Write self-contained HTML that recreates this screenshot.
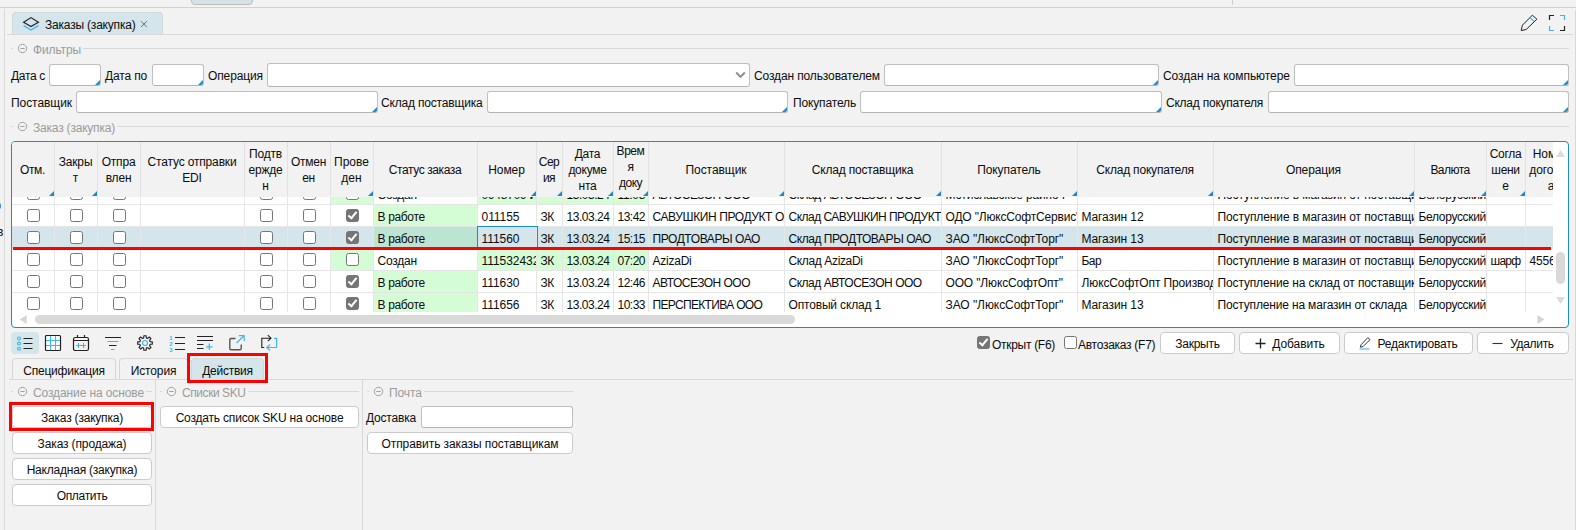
<!DOCTYPE html>
<html lang="ru"><head><meta charset="utf-8"><title>Заказы (закупка)</title>
<style>
html,body{margin:0;padding:0}
body{width:1576px;height:530px;background:#f2f2f2;position:relative;overflow:hidden;font-family:"Liberation Sans",sans-serif;font-size:12px;color:#0c0c0c}
.a{position:absolute}
.t{position:absolute;white-space:nowrap;line-height:16px;height:16px;margin-top:1px}
.hl{position:absolute;height:1px;background:#d8d8d8}
.vl{position:absolute;width:1px;background:#d8d8d8}
.in{position:absolute;background:#fff;border:1px solid #bfbfbf;border-bottom-color:#b4b4b4;border-radius:3px;box-sizing:border-box;overflow:hidden}
.in.cr:after{content:"";position:absolute;right:0;bottom:0;border-style:solid;border-width:0 0 5px 5px;border-color:transparent transparent #1d8bc6 transparent}
.btn{position:absolute;background:#fff;border:1px solid #cbcbcb;border-radius:4px;box-sizing:border-box;text-align:center;line-height:23px;white-space:nowrap}
.fs{position:absolute;color:#9b9b9b;white-space:nowrap;line-height:16px;height:16px;margin-top:2px}
.cb{position:absolute;width:13px;height:13px;box-sizing:border-box;border:1px solid #767676;border-radius:2.5px;background:#fff}
.cb.k{background:#757575;border-color:#757575}
.cb.k:after{content:"";position:absolute;left:3.2px;top:0.2px;width:3.2px;height:7px;border:solid #fff;border-width:0 2px 2px 0;transform:rotate(40deg)}
.hc{position:absolute;top:0;height:54px;border-right:1px solid #e2e2e2;box-sizing:border-box;display:flex;align-items:center;justify-content:center;text-align:center;line-height:16px;overflow:hidden;padding-top:2px}
.hc.s:after{content:"";position:absolute;right:0;bottom:0;border-style:solid;border-width:0 0 5px 5px;border-color:transparent transparent #1d8bc6 transparent}
.c{position:absolute;height:22px;box-sizing:border-box;border-right:1px solid #e6e6e6;border-bottom:1px solid #e6e6e6;background:#fff;overflow:hidden;white-space:nowrap;line-height:24px;padding-left:4px}
.c.g{background:#d5fdd5}
.c.s{background:#d4e5eb}
.c.s.g{background:#bce4d2}
.c .cb{top:4px}
</style></head><body>

<div class="a" style="left:191px;top:-2px;width:62px;height:7px;background:#d5e3e8;border:1px solid #bcbcbc;border-radius:0 0 4px 4px;box-sizing:border-box"></div>
<div class="hl" style="left:0;top:7px;width:1576px;background:#d2d2d2"></div>
<div class="vl" style="left:1232px;top:0;height:5px;background:#cfcfcf"></div>
<div class="vl" style="left:4px;top:9px;height:521px"></div>
<div class="vl" style="left:1575px;top:10px;height:520px"></div>
<div class="a" style="left:12px;top:12px;width:151px;height:22px;background:#d4e5eb;border:1px solid #cfdade;border-bottom:none;border-radius:4px 4px 0 0;box-sizing:border-box"></div>
<div class="hl" style="left:7px;top:34px;width:1566px"></div>
<svg class="a" style="left:22px;top:16px" width="18" height="16" viewBox="0 0 18 16"><path d="M1.6 6.2 L9 1.6 L16.4 6.2 L9 10.6 Z" fill="none" stroke="#222" stroke-width="1.2" stroke-linejoin="miter"/><path d="M1.6 9.6 L9 14 L16.4 9.6" fill="none" stroke="#3db8ee" stroke-width="1.3"/></svg>
<div class="t" id="tabt" style="letter-spacing:-0.199px;left:45px;top:16px">Заказы (закупка)</div>
<svg class="a" style="left:140px;top:20px" width="8" height="8" viewBox="0 0 8 8"><path d="M1 1.2 L6.8 7 M6.8 1.2 L1 7" stroke="#707070" stroke-width="1" fill="none"/></svg>
<svg class="a" style="left:1519px;top:13px" width="20" height="20" viewBox="0 0 20 20"><path d="M3.4 12.2 L13.3 2.2 L17.9 6.2 L7.3 16.4 L2.2 17.6 Z" fill="none" stroke="#222" stroke-width="1" stroke-linejoin="round"/><path d="M11.2 4.7 L15.2 8.6" stroke="#3db8ee" stroke-width="1.2"/></svg>
<svg class="a" style="left:1548px;top:14px" width="18" height="18" viewBox="0 0 18 18"><path d="M1.5 6 V1.5 H6" fill="none" stroke="#222" stroke-width="1.2"/><path d="M12 1.5 H16.5 V6" fill="none" stroke="#3db8ee" stroke-width="1.2"/><path d="M1.5 12 V16.5 H6" fill="none" stroke="#3db8ee" stroke-width="1.2"/><path d="M12 16.5 H16.5 V12" fill="none" stroke="#222" stroke-width="1.2"/></svg>
<div class="hl" style="left:11px;top:48px;width:2px"></div>
<svg class="a" style="left:17px;top:43px" width="11" height="11" viewBox="0 0 11 11"><circle cx="5.5" cy="5.5" r="4.2" fill="none" stroke="#a2a2a2" stroke-width="1"/><path d="M3.3 5.5 H7.7" stroke="#a2a2a2" stroke-width="1"/></svg>
<div class="fs" id="fs1" style="letter-spacing:-0.134px;left:33px;top:40px">Фильтры</div>
<div class="hl" style="left:83px;top:48px;width:1486px"></div>
<div class="t" id="l1" style="letter-spacing:-0.318px;left:11px;top:67px">Дата с</div>
<div class="in cr" style="left:49px;top:64px;width:52px;height:22px"></div>
<div class="t" id="l2" style="letter-spacing:-0.154px;left:105px;top:67px">Дата по</div>
<div class="in cr" style="left:152px;top:64px;width:52px;height:22px"></div>
<div class="t" id="l3" style="letter-spacing:-0.117px;left:208px;top:67px">Операция</div>
<div class="in" style="left:267px;top:63px;width:483px;height:24px"></div>
<svg class="a" style="left:735px;top:71px" width="11" height="8" viewBox="0 0 11 8"><path d="M1.2 1.5 L5.5 5.8 L9.8 1.5" fill="none" stroke="#8a8a8a" stroke-width="1.9"/></svg>
<div class="t" id="l4" style="letter-spacing:-0.125px;left:754px;top:67px">Создан пользователем</div>
<div class="in cr" style="left:884px;top:64px;width:275px;height:22px"></div>
<div class="t" id="l5" style="letter-spacing:-0.045px;left:1163px;top:67px">Создан на компьютере</div>
<div class="in cr" style="left:1294px;top:64px;width:275px;height:22px"></div>
<div class="t" id="l6" style="letter-spacing:-0.061px;left:11px;top:94px">Поставщик</div>
<div class="in cr" style="left:76px;top:91px;width:302px;height:22px"></div>
<div class="t" id="l7" style="letter-spacing:-0.183px;left:381px;top:94px">Склад поставщика</div>
<div class="in cr" style="left:487px;top:91px;width:301px;height:22px"></div>
<div class="t" id="l8" style="letter-spacing:-0.148px;left:793px;top:94px">Покупатель</div>
<div class="in cr" style="left:860px;top:91px;width:302px;height:22px"></div>
<div class="t" id="l9" style="letter-spacing:-0.229px;left:1166px;top:94px">Склад покупателя</div>
<div class="in cr" style="left:1268px;top:91px;width:301px;height:22px"></div>
<div class="hl" style="left:11px;top:126px;width:2px"></div>
<svg class="a" style="left:17px;top:121px" width="11" height="11" viewBox="0 0 11 11"><circle cx="5.5" cy="5.5" r="4.2" fill="none" stroke="#a2a2a2" stroke-width="1"/><path d="M3.3 5.5 H7.7" stroke="#a2a2a2" stroke-width="1"/></svg>
<div class="fs" id="fs2" style="letter-spacing:-0.204px;left:33px;top:118px">Заказ (закупка)</div>
<div class="hl" style="left:117px;top:126px;width:1452px"></div>
<div class="a" style="left:11px;top:141px;width:1558px;height:187px;border:1.5px solid #1d8bc6;border-radius:4px;box-sizing:border-box;background:#fff;overflow:hidden">
<div class="a" style="left:-12.5px;top:-142.5px;width:1576px;height:530px">
<div class="a" style="left:12px;top:142px;width:1541px;height:55px;background:#f2f2f2;overflow:hidden">
<div class="hc s" id="h0" style="letter-spacing:-0.355px;left:0px;width:43px"><span>Отм.</span></div>
<div class="hc s" id="h1" style="letter-spacing:-0.147px;left:43px;width:43px"><span>Закры<br>т</span></div>
<div class="hc" id="h2" style="letter-spacing:-0.188px;left:86px;width:43px"><span>Отпра<br>влен</span></div>
<div class="hc" id="h3" style="letter-spacing:-0.157px;left:129px;width:104px"><span>Статус отправки<br>EDI</span></div>
<div class="hc" id="h4" style="letter-spacing:-0.184px;left:233px;width:43px"><span>Подтв<br>ержде<br>н</span></div>
<div class="hc" id="h5" style="letter-spacing:-0.278px;left:276px;width:43px"><span>Отмен<br>ен</span></div>
<div class="hc s" id="h6" style="letter-spacing:0.022px;left:319px;width:43px"><span>Прове<br>ден</span></div>
<div class="hc" id="h7" style="letter-spacing:-0.398px;left:362px;width:104px"><span>Статус заказа</span></div>
<div class="hc s" id="h8" style="letter-spacing:-0.087px;left:466px;width:59px"><span>Номер</span></div>
<div class="hc s" id="h9" style="letter-spacing:-0.505px;left:525px;width:26px"><span>Сер<br>ия</span></div>
<div class="hc s" id="h10" style="letter-spacing:-0.27px;left:551px;width:51px"><span>Дата<br>докуме<br>нта</span></div>
<div class="hc s" id="h11" style="letter-spacing:-0.465px;left:602px;width:35px;align-items:flex-start;padding-top:1px"><span>Врем<br>я<br>доку<br>мента</span></div>
<div class="hc s" id="h12" style="letter-spacing:-0.061px;left:637px;width:136px"><span>Поставщик</span></div>
<div class="hc s" id="h13" style="letter-spacing:-0.183px;left:773px;width:157px"><span>Склад поставщика</span></div>
<div class="hc s" id="h14" style="letter-spacing:-0.098px;left:930px;width:136px"><span>Покупатель</span></div>
<div class="hc s" id="h15" style="letter-spacing:-0.198px;left:1066px;width:136px"><span>Склад покупателя</span></div>
<div class="hc s" id="h16" style="letter-spacing:-0.117px;left:1202px;width:201px"><span>Операция</span></div>
<div class="hc s" id="h17" style="letter-spacing:-0.534px;left:1403px;width:72px"><span>Валюта</span></div>
<div class="hc s" id="h18" style="letter-spacing:-0.328px;left:1475px;width:39px"><span>Согла<br>шени<br>е</span></div>
<div class="hc" id="h19" style="letter-spacing:-0.087px;left:1514px;width:52px"><span>Номер<br>договор<br>а</span></div>
</div>
<div class="a" style="left:12px;top:197px;width:1541px;height:115px;overflow:hidden;background:#fff">
<div class="c" style="left:0px;top:-14px;width:43px;padding:0"><div class="cb" style="left:15px"></div></div>
<div class="c" style="left:43px;top:-14px;width:43px;padding:0"><div class="cb" style="left:15px"></div></div>
<div class="c" style="left:86px;top:-14px;width:43px;padding:0"><div class="cb" style="left:15px"></div></div>
<div class="c" id="r0c3" style="left:129px;top:-14px;width:104px"></div>
<div class="c" style="left:233px;top:-14px;width:43px;padding:0"><div class="cb" style="left:15px"></div></div>
<div class="c" style="left:276px;top:-14px;width:43px;padding:0"><div class="cb" style="left:15px"></div></div>
<div class="c g" style="left:319px;top:-14px;width:43px;padding:0"><div class="cb" style="left:15px"></div></div>
<div class="c" id="r0c7" style="letter-spacing:-0.208px;left:362px;top:-14px;width:104px">Создан</div>
<div class="c g" id="r0c8" style="letter-spacing:-0.246px;left:466px;top:-14px;width:59px">0948709 И</div>
<div class="c g" id="r0c9" style="left:525px;top:-14px;width:26px"></div>
<div class="c g" id="r0c10" style="letter-spacing:-0.465px;left:551px;top:-14px;width:51px">13.03.24</div>
<div class="c g" id="r0c11" style="letter-spacing:-0.328px;left:602px;top:-14px;width:35px">11:08</div>
<div class="c" id="r0c12" style="letter-spacing:-0.514px;left:637px;top:-14px;width:136px">АВТОСЕЗОН ООО</div>
<div class="c" id="r0c13" style="letter-spacing:-0.476px;left:773px;top:-14px;width:157px">Склад АВТОСЕЗОН ООО</div>
<div class="c" id="r0c14" style="letter-spacing:-0.141px;left:930px;top:-14px;width:136px">Мстиславское райпо I</div>
<div class="c" id="r0c15" style="left:1066px;top:-14px;width:136px"></div>
<div class="c" id="r0c16" style="letter-spacing:-0.097px;left:1202px;top:-14px;width:201px">Поступление в магазин от поставщика</div>
<div class="c" id="r0c17" style="letter-spacing:-0.321px;left:1403px;top:-14px;width:72px">Белорусский рубль</div>
<div class="c" id="r0c18" style="left:1475px;top:-14px;width:39px"></div>
<div class="c" id="r0c19" style="left:1514px;top:-14px;width:52px"></div>
<div class="c" style="left:0px;top:8px;width:43px;padding:0"><div class="cb" style="left:15px"></div></div>
<div class="c" style="left:43px;top:8px;width:43px;padding:0"><div class="cb" style="left:15px"></div></div>
<div class="c" style="left:86px;top:8px;width:43px;padding:0"><div class="cb" style="left:15px"></div></div>
<div class="c" id="r1c3" style="left:129px;top:8px;width:104px"></div>
<div class="c" style="left:233px;top:8px;width:43px;padding:0"><div class="cb" style="left:15px"></div></div>
<div class="c" style="left:276px;top:8px;width:43px;padding:0"><div class="cb" style="left:15px"></div></div>
<div class="c" style="left:319px;top:8px;width:43px;padding:0"><div class="cb k" style="left:15px"></div></div>
<div class="c g" id="r1c7" style="letter-spacing:-0.339px;left:362px;top:8px;width:104px">В работе</div>
<div class="c" id="r1c8" style="letter-spacing:-0.044px;left:466px;top:8px;width:59px">011155</div>
<div class="c" id="r1c9" style="letter-spacing:-0.375px;left:525px;top:8px;width:26px">ЗК</div>
<div class="c" id="r1c10" style="letter-spacing:-0.465px;left:551px;top:8px;width:51px">13.03.24</div>
<div class="c" id="r1c11" style="letter-spacing:-0.506px;left:602px;top:8px;width:35px">13:42</div>
<div class="c" id="r1c12" style="letter-spacing:-0.396px;left:637px;top:8px;width:136px">САВУШКИН ПРОДУКТ ОАО</div>
<div class="c" id="r1c13" style="letter-spacing:-0.521px;left:773px;top:8px;width:157px">Склад САВУШКИН ПРОДУКТ ОАО</div>
<div class="c" id="r1c14" style="letter-spacing:-0.18px;left:930px;top:8px;width:136px">ОДО "ЛюксСофтСервис"</div>
<div class="c" id="r1c15" style="letter-spacing:-0.098px;left:1066px;top:8px;width:136px">Магазин 12</div>
<div class="c" id="r1c16" style="letter-spacing:-0.097px;left:1202px;top:8px;width:201px">Поступление в магазин от поставщика</div>
<div class="c" id="r1c17" style="letter-spacing:-0.321px;left:1403px;top:8px;width:72px">Белорусский рубль</div>
<div class="c" id="r1c18" style="left:1475px;top:8px;width:39px"></div>
<div class="c" id="r1c19" style="left:1514px;top:8px;width:52px"></div>
<div class="c s" style="left:0px;top:30px;width:43px;padding:0"><div class="cb" style="left:15px"></div></div>
<div class="c s" style="left:43px;top:30px;width:43px;padding:0"><div class="cb" style="left:15px"></div></div>
<div class="c s" style="left:86px;top:30px;width:43px;padding:0"><div class="cb" style="left:15px"></div></div>
<div class="c s" id="r2c3" style="left:129px;top:30px;width:104px"></div>
<div class="c s" style="left:233px;top:30px;width:43px;padding:0"><div class="cb" style="left:15px"></div></div>
<div class="c s" style="left:276px;top:30px;width:43px;padding:0"><div class="cb" style="left:15px"></div></div>
<div class="c s" style="left:319px;top:30px;width:43px;padding:0"><div class="cb k" style="left:15px"></div></div>
<div class="c s g" id="r2c7" style="letter-spacing:-0.339px;left:362px;top:30px;width:104px">В работе</div>
<div class="c s" id="r2c8" style="letter-spacing:-0.044px;left:466px;top:30px;width:59px">111560</div>
<div class="c s" id="r2c9" style="letter-spacing:-0.375px;left:525px;top:30px;width:26px">ЗК</div>
<div class="c s" id="r2c10" style="letter-spacing:-0.465px;left:551px;top:30px;width:51px">13.03.24</div>
<div class="c s" id="r2c11" style="letter-spacing:-0.506px;left:602px;top:30px;width:35px">15:15</div>
<div class="c s" id="r2c12" style="letter-spacing:-0.422px;left:637px;top:30px;width:136px">ПРОДТОВАРЫ ОАО</div>
<div class="c s" id="r2c13" style="letter-spacing:-0.448px;left:773px;top:30px;width:157px">Склад ПРОДТОВАРЫ ОАО</div>
<div class="c s" id="r2c14" style="letter-spacing:-0.067px;left:930px;top:30px;width:136px">ЗАО "ЛюксСофтТорг"</div>
<div class="c s" id="r2c15" style="letter-spacing:-0.098px;left:1066px;top:30px;width:136px">Магазин 13</div>
<div class="c s" id="r2c16" style="letter-spacing:-0.097px;left:1202px;top:30px;width:201px">Поступление в магазин от поставщика</div>
<div class="c s" id="r2c17" style="letter-spacing:-0.321px;left:1403px;top:30px;width:72px">Белорусский рубль</div>
<div class="c s" id="r2c18" style="left:1475px;top:30px;width:39px"></div>
<div class="c s" id="r2c19" style="left:1514px;top:30px;width:52px"></div>
<div class="c" style="left:0px;top:52px;width:43px;padding:0"><div class="cb" style="left:15px"></div></div>
<div class="c" style="left:43px;top:52px;width:43px;padding:0"><div class="cb" style="left:15px"></div></div>
<div class="c" style="left:86px;top:52px;width:43px;padding:0"><div class="cb" style="left:15px"></div></div>
<div class="c" id="r3c3" style="left:129px;top:52px;width:104px"></div>
<div class="c" style="left:233px;top:52px;width:43px;padding:0"><div class="cb" style="left:15px"></div></div>
<div class="c" style="left:276px;top:52px;width:43px;padding:0"><div class="cb" style="left:15px"></div></div>
<div class="c g" style="left:319px;top:52px;width:43px;padding:0"><div class="cb" style="left:15px"></div></div>
<div class="c" id="r3c7" style="letter-spacing:-0.208px;left:362px;top:52px;width:104px">Создан</div>
<div class="c g" id="r3c8" style="letter-spacing:-0.045px;left:466px;top:52px;width:59px">1115324321</div>
<div class="c g" id="r3c9" style="letter-spacing:-0.375px;left:525px;top:52px;width:26px">ЗК</div>
<div class="c g" id="r3c10" style="letter-spacing:-0.465px;left:551px;top:52px;width:51px">13.03.24</div>
<div class="c g" id="r3c11" style="letter-spacing:-0.506px;left:602px;top:52px;width:35px">07:20</div>
<div class="c" id="r3c12" style="letter-spacing:-0.241px;left:637px;top:52px;width:136px">AzizaDi</div>
<div class="c" id="r3c13" style="letter-spacing:-0.365px;left:773px;top:52px;width:157px">Склад AzizaDi</div>
<div class="c" id="r3c14" style="letter-spacing:-0.067px;left:930px;top:52px;width:136px">ЗАО "ЛюксСофтТорг"</div>
<div class="c" id="r3c15" style="letter-spacing:-0.578px;left:1066px;top:52px;width:136px">Бар</div>
<div class="c" id="r3c16" style="letter-spacing:-0.097px;left:1202px;top:52px;width:201px">Поступление в магазин от поставщика</div>
<div class="c" id="r3c17" style="letter-spacing:-0.321px;left:1403px;top:52px;width:72px">Белорусский рубль</div>
<div class="c" id="r3c18" style="letter-spacing:-0.715px;left:1475px;top:52px;width:39px">шарф</div>
<div class="c" id="r3c19" style="letter-spacing:-0.177px;left:1514px;top:52px;width:52px">4556</div>
<div class="c" style="left:0px;top:74px;width:43px;padding:0"><div class="cb" style="left:15px"></div></div>
<div class="c" style="left:43px;top:74px;width:43px;padding:0"><div class="cb" style="left:15px"></div></div>
<div class="c" style="left:86px;top:74px;width:43px;padding:0"><div class="cb" style="left:15px"></div></div>
<div class="c" id="r4c3" style="left:129px;top:74px;width:104px"></div>
<div class="c" style="left:233px;top:74px;width:43px;padding:0"><div class="cb" style="left:15px"></div></div>
<div class="c" style="left:276px;top:74px;width:43px;padding:0"><div class="cb" style="left:15px"></div></div>
<div class="c" style="left:319px;top:74px;width:43px;padding:0"><div class="cb k" style="left:15px"></div></div>
<div class="c g" id="r4c7" style="letter-spacing:-0.339px;left:362px;top:74px;width:104px">В работе</div>
<div class="c" id="r4c8" style="letter-spacing:-0.044px;left:466px;top:74px;width:59px">111630</div>
<div class="c" id="r4c9" style="letter-spacing:-0.375px;left:525px;top:74px;width:26px">ЗК</div>
<div class="c" id="r4c10" style="letter-spacing:-0.465px;left:551px;top:74px;width:51px">13.03.24</div>
<div class="c" id="r4c11" style="letter-spacing:-0.506px;left:602px;top:74px;width:35px">12:46</div>
<div class="c" id="r4c12" style="letter-spacing:-0.514px;left:637px;top:74px;width:136px">АВТОСЕЗОН ООО</div>
<div class="c" id="r4c13" style="letter-spacing:-0.476px;left:773px;top:74px;width:157px">Склад АВТОСЕЗОН ООО</div>
<div class="c" id="r4c14" style="letter-spacing:-0.152px;left:930px;top:74px;width:136px">ООО "ЛюксСофтОпт"</div>
<div class="c" id="r4c15" style="letter-spacing:-0.116px;left:1066px;top:74px;width:136px">ЛюксСофтОпт Производство</div>
<div class="c" id="r4c16" style="letter-spacing:-0.137px;left:1202px;top:74px;width:201px">Поступление на склад от поставщика</div>
<div class="c" id="r4c17" style="letter-spacing:-0.321px;left:1403px;top:74px;width:72px">Белорусский рубль</div>
<div class="c" id="r4c18" style="left:1475px;top:74px;width:39px"></div>
<div class="c" id="r4c19" style="left:1514px;top:74px;width:52px"></div>
<div class="c" style="left:0px;top:96px;width:43px;padding:0"><div class="cb" style="left:15px"></div></div>
<div class="c" style="left:43px;top:96px;width:43px;padding:0"><div class="cb" style="left:15px"></div></div>
<div class="c" style="left:86px;top:96px;width:43px;padding:0"><div class="cb" style="left:15px"></div></div>
<div class="c" id="r5c3" style="left:129px;top:96px;width:104px"></div>
<div class="c" style="left:233px;top:96px;width:43px;padding:0"><div class="cb" style="left:15px"></div></div>
<div class="c" style="left:276px;top:96px;width:43px;padding:0"><div class="cb" style="left:15px"></div></div>
<div class="c" style="left:319px;top:96px;width:43px;padding:0"><div class="cb k" style="left:15px"></div></div>
<div class="c g" id="r5c7" style="letter-spacing:-0.339px;left:362px;top:96px;width:104px">В работе</div>
<div class="c" id="r5c8" style="letter-spacing:-0.044px;left:466px;top:96px;width:59px">111656</div>
<div class="c" id="r5c9" style="letter-spacing:-0.375px;left:525px;top:96px;width:26px">ЗК</div>
<div class="c" id="r5c10" style="letter-spacing:-0.465px;left:551px;top:96px;width:51px">13.03.24</div>
<div class="c" id="r5c11" style="letter-spacing:-0.506px;left:602px;top:96px;width:35px">10:33</div>
<div class="c" id="r5c12" style="letter-spacing:-0.666px;left:637px;top:96px;width:136px">ПЕРСПЕКТИВА ООО</div>
<div class="c" id="r5c13" style="letter-spacing:-0.166px;left:773px;top:96px;width:157px">Оптовый склад 1</div>
<div class="c" id="r5c14" style="letter-spacing:-0.067px;left:930px;top:96px;width:136px">ЗАО "ЛюксСофтТорг"</div>
<div class="c" id="r5c15" style="letter-spacing:-0.098px;left:1066px;top:96px;width:136px">Магазин 13</div>
<div class="c" id="r5c16" style="letter-spacing:-0.166px;left:1202px;top:96px;width:201px">Поступление на магазин от склада</div>
<div class="c" id="r5c17" style="letter-spacing:-0.321px;left:1403px;top:96px;width:72px">Белорусский рубль</div>
<div class="c" id="r5c18" style="left:1475px;top:96px;width:39px"></div>
<div class="c" id="r5c19" style="left:1514px;top:96px;width:52px"></div>
</div>
<div class="a" style="left:477px;top:226px;width:61px;height:22px;border:1px solid #1d8bc6;box-sizing:border-box"></div>
<div class="a" style="left:13px;top:247px;width:1538px;height:3px;background:#fd0000"></div>
<div class="a" style="left:35px;top:315px;width:760px;height:9px;background:#d9d9d9;border-radius:4.5px"></div>
<svg class="a" style="left:18px;top:314px" width="10" height="11" viewBox="0 0 10 11"><path d="M8.7 1 L1.7 5.5 L8.7 10 Z" fill="#d6d6d6"/></svg>
<svg class="a" style="left:1536px;top:314px" width="10" height="11" viewBox="0 0 10 11"><path d="M1.5 1 L8.5 5.5 L1.5 10 Z" fill="#d4d4d4"/></svg>
<div class="a" style="left:1556px;top:252px;width:9px;height:32px;background:#d9d9d9;border-radius:4.5px"></div>
<svg class="a" style="left:1555px;top:149px" width="11" height="9" viewBox="0 0 11 9"><path d="M1 8 L5.5 1 L10 8 Z" fill="#dcdcdc"/></svg>
<svg class="a" style="left:1555px;top:296px" width="11" height="9" viewBox="0 0 11 9"><path d="M1 1 L5.5 8 L10 1 Z" fill="#dcdcdc"/></svg>
</div></div>
<div class="a" style="left:11px;top:332px;width:28px;height:22px;background:#d4e5eb;border-radius:4px"></div>
<svg class="a" style="left:16px;top:334px" width="18" height="18" viewBox="0 0 18 18" fill="none"><g stroke="#3db8ee" stroke-width="1.1"><circle cx="3" cy="4.5" r="1.45"/><circle cx="3" cy="9.6" r="1.45"/><circle cx="3" cy="14.7" r="1.45"/></g><path d="M7.5 4.5 H16.5 M7.5 9.5 H16.5 M7.5 14.5 H16.5" stroke="#222" stroke-width="1.1"/></svg>
<svg class="a" style="left:44px;top:334px" width="18" height="18" viewBox="0 0 18 18" fill="none"><rect x="1.5" y="1.5" width="15" height="15" rx="1" fill="#fff" stroke="none"/><path d="M6.5 2 V16 M11.5 2 V16 M2 6.5 H16 M2 11.5 H16" stroke="#3db8ee" stroke-width="1.1"/><rect x="1.5" y="1.5" width="15" height="15" rx="1" stroke="#222" stroke-width="1.2"/></svg>
<svg class="a" style="left:72px;top:334px" width="18" height="18" viewBox="0 0 18 18" fill="none"><rect x="1.5" y="3.5" width="15" height="13" rx="1.8" stroke="#222" stroke-width="1.2"/><path d="M1.5 6.5 H16.5 M5.5 1 V3.5 M12.5 1 V3.5" stroke="#222" stroke-width="1.2"/><path d="M4 11.5 H14 M6.5 9 V14 M11.5 9 V14" stroke="#3db8ee" stroke-width="1.1"/></svg>
<svg class="a" style="left:104px;top:334px" width="18" height="18" viewBox="0 0 18 18" fill="none"><path d="M1 3.5 H17 M5 11.5 H12.5" stroke="#222" stroke-width="1.1"/><path d="M3.5 7.5 H14.5 M7 15.5 H10.5" stroke="#3db8ee" stroke-width="1.2"/></svg>
<svg class="a" style="left:136px;top:334px" width="18" height="18" viewBox="0 0 18 18" fill="none"><path d="M7.84 1.69 L10.16 1.69 L10.32 3.87 L11.70 4.44 L13.35 3.01 L14.99 4.65 L13.56 6.30 L14.13 7.68 L16.31 7.84 L16.31 10.16 L14.13 10.32 L13.56 11.70 L14.99 13.35 L13.35 14.99 L11.70 13.56 L10.32 14.13 L10.16 16.31 L7.84 16.31 L7.68 14.13 L6.30 13.56 L4.65 14.99 L3.01 13.35 L4.44 11.70 L3.87 10.32 L1.69 10.16 L1.69 7.84 L3.87 7.68 L4.44 6.30 L3.01 4.65 L4.65 3.01 L6.30 4.44 L7.68 3.87 Z" stroke="#222" stroke-width="1.1" stroke-linejoin="round"/><circle cx="9" cy="9" r="2.5" stroke="#3db8ee" stroke-width="1.2"/></svg>
<svg class="a" style="left:168px;top:334px" width="18" height="18" viewBox="0 0 18 18" fill="none"><path d="M7 3.5 H17 M7 9.5 H17 M7 15.5 H17" stroke="#222" stroke-width="1.1"/><text x="1.2" y="5.6" font-family="Liberation Sans,sans-serif" font-size="6" font-weight="bold" fill="#3db8ee" stroke="none">1</text><text x="1.2" y="11.6" font-family="Liberation Sans,sans-serif" font-size="6" font-weight="bold" fill="#3db8ee" stroke="none">2</text><text x="1.2" y="17.6" font-family="Liberation Sans,sans-serif" font-size="6" font-weight="bold" fill="#3db8ee" stroke="none">3</text></svg>
<svg class="a" style="left:196px;top:334px" width="18" height="18" viewBox="0 0 18 18" fill="none"><path d="M1 2.5 H17 M1 6.5 H17 M1 10.5 H7.5 M1 14.5 H7.5" stroke="#222" stroke-width="1.1"/><path d="M10 12.8 H16.6 M13.3 9.5 V16.1" stroke="#3db8ee" stroke-width="1.2"/></svg>
<svg class="a" style="left:228px;top:334px" width="18" height="18" viewBox="0 0 18 18" fill="none"><path d="M7.5 4.5 H3 Q1.8 4.5 1.8 5.7 V14.6 Q1.8 15.8 3 15.8 H12 Q13.2 15.8 13.2 14.6 V10.5" stroke="#555" stroke-width="1.4"/><path d="M8.5 9 L16 1.8 M10.8 1.6 H16.2 V7" stroke="#3db8ee" stroke-width="1.2"/></svg>
<svg class="a" style="left:260px;top:334px" width="18" height="18" viewBox="0 0 18 18" fill="none"><path d="M4.2 13.5 H1.8 V4.2 H10.5 M7.8 1.2 L11 4.2 L7.8 7.2" stroke="#222" stroke-width="1.1"/><path d="M14 4.4 H16.6 V13.5 H7 M10 10.5 L6.8 13.5 L10 16.5" stroke="#3db8ee" stroke-width="1.2"/></svg>
<div class="cb k" style="left:977px;top:336px"></div>
<div class="t" id="ck1" style="letter-spacing:-0.293px;left:992px;top:336px">Открыт (F6)</div>
<div class="cb" style="left:1064px;top:336px"></div>
<div class="t" id="ck2" style="letter-spacing:-0.273px;left:1078px;top:336px">Автозаказ (F7)</div>
<div class="btn" id="b1" style="letter-spacing:-0.281px;left:1160px;top:332px;width:75px;height:22px">Закрыть</div>
<div class="btn" id="b2" style="letter-spacing:-0.068px;left:1239px;top:332px;width:101px;height:22px"><span style="position:relative;left:9px">Добавить</span></div>
<svg class="a" style="left:1255px;top:338px" width="11" height="11" viewBox="0 0 11 11" fill="none"><path d="M5.5 0.5 V10.5 M0.5 5.5 H10.5" stroke="#222" stroke-width="1.3"/></svg>
<div class="btn" id="b3" style="letter-spacing:-0.224px;left:1344px;top:332px;width:129px;height:22px"><span style="position:relative;left:9px">Редактировать</span></div>
<svg class="a" style="left:1358px;top:336px" width="14" height="14" viewBox="0 0 14 14" fill="none"><path d="M3 8.8 L9.8 1.6 L12 3.6 L5 10.6 L2.4 11.2 Z" stroke="#333" stroke-width="1" stroke-linejoin="round"/><path d="M1.5 13 H11.5" stroke="#3db8ee" stroke-width="1.1"/></svg>
<div class="btn" id="b4" style="letter-spacing:-0.333px;left:1477px;top:332px;width:92px;height:22px"><span style="position:relative;left:9px">Удалить</span></div>
<svg class="a" style="left:1492px;top:338px" width="11" height="11" viewBox="0 0 11 11" fill="none"><path d="M0.5 5.5 H10.5" stroke="#333" stroke-width="1.1"/></svg>
<div class="a" style="left:12px;top:358px;width:104px;height:22px;background:#f2f2f2;border:1px solid #d6d6d6;border-bottom:none;border-radius:4px 4px 0 0;box-sizing:border-box;text-align:center;line-height:24px;white-space:nowrap"><span id="tb1" style="letter-spacing:-0.23px">Спецификация</span></div>
<div class="a" style="left:119px;top:358px;width:69px;height:22px;background:#f2f2f2;border:1px solid #d6d6d6;border-bottom:none;border-radius:4px 4px 0 0;box-sizing:border-box;text-align:center;line-height:24px;white-space:nowrap"><span id="tb2" style="letter-spacing:-0.114px">История</span></div>
<div class="a" style="left:191px;top:358px;width:73px;height:22px;background:#d4e5eb;border:1px solid #d6d6d6;border-bottom:none;border-radius:4px 4px 0 0;box-sizing:border-box;text-align:center;line-height:24px;white-space:nowrap"><span id="tb3" style="letter-spacing:-0.26px">Действия</span></div>
<div class="hl" style="left:9px;top:379px;width:1564px"></div>
<div class="a" style="left:187px;top:353px;width:81px;height:30px;border:3px solid #fd0000;box-sizing:border-box"></div>
<div class="vl" style="left:155px;top:380px;height:150px"></div>
<div class="vl" style="left:362px;top:380px;height:150px"></div>
<div class="hl" style="left:11px;top:391px;width:2px"></div>
<svg class="a" style="left:17px;top:386px" width="11" height="11" viewBox="0 0 11 11"><circle cx="5.5" cy="5.5" r="4.2" fill="none" stroke="#a2a2a2" stroke-width="1"/><path d="M3.3 5.5 H7.7" stroke="#a2a2a2" stroke-width="1"/></svg>
<div class="fs" id="fs3" style="letter-spacing:-0.11px;left:33px;top:383px">Создание на основе</div>
<div class="hl" style="left:146px;top:391px;width:6px"></div>
<div class="hl" style="left:160px;top:391px;width:2px"></div>
<svg class="a" style="left:166px;top:386px" width="11" height="11" viewBox="0 0 11 11"><circle cx="5.5" cy="5.5" r="4.2" fill="none" stroke="#a2a2a2" stroke-width="1"/><path d="M3.3 5.5 H7.7" stroke="#a2a2a2" stroke-width="1"/></svg>
<div class="fs" id="fs4" style="letter-spacing:-0.433px;left:182px;top:383px">Списки SKU</div>
<div class="hl" style="left:248px;top:391px;width:111px"></div>
<div class="hl" style="left:367px;top:391px;width:2px"></div>
<svg class="a" style="left:373px;top:386px" width="11" height="11" viewBox="0 0 11 11"><circle cx="5.5" cy="5.5" r="4.2" fill="none" stroke="#a2a2a2" stroke-width="1"/><path d="M3.3 5.5 H7.7" stroke="#a2a2a2" stroke-width="1"/></svg>
<div class="fs" id="fs5" style="letter-spacing:-0.116px;left:389px;top:383px">Почта</div>
<div class="hl" style="left:424px;top:391px;width:149px"></div>
<div class="btn" id="bb0" style="letter-spacing:-0.204px;left:12px;top:406px;width:140px;height:22px">Заказ (закупка)</div>
<div class="btn" id="bb1" style="letter-spacing:-0.134px;left:12px;top:432px;width:140px;height:22px">Заказ (продажа)</div>
<div class="btn" id="bb2" style="letter-spacing:-0.212px;left:12px;top:458px;width:140px;height:22px">Накладная (закупка)</div>
<div class="btn" id="bb3" style="letter-spacing:-0.307px;left:12px;top:484px;width:140px;height:22px">Оплатить</div>
<div class="a" style="left:9px;top:402px;width:145px;height:29px;border:3px solid #fd0000;box-sizing:border-box"></div>
<div class="btn" id="bb4" style="letter-spacing:-0.19px;left:160px;top:406px;width:199px;height:22px">Создать список SKU на основе</div>
<div class="t" id="l10" style="letter-spacing:-0.193px;left:366px;top:409px">Доставка</div>
<div class="in" style="left:421px;top:406px;width:152px;height:22px"></div>
<div class="btn" id="bb5" style="letter-spacing:-0.076px;left:367px;top:432px;width:206px;height:22px">Отправить заказы поставщикам</div>
<div class="a" style="left:-3px;top:203px;width:4px;height:6px;border-radius:2px;background:#3a8ff0"></div>
<div class="t" style="left:-3px;top:223px">в</div>
</body></html>
